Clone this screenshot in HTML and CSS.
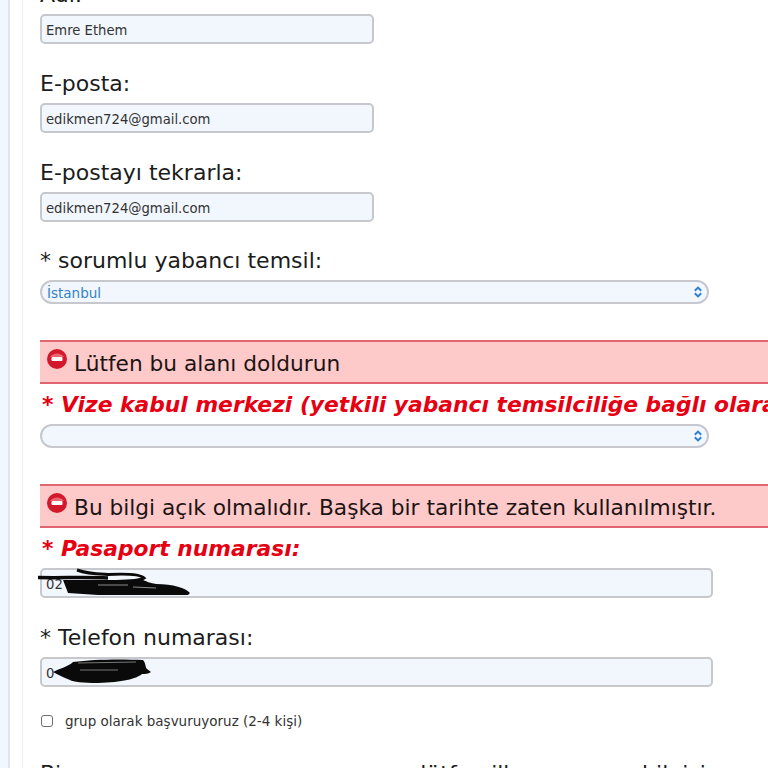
FILE: index.html
```html
<!DOCTYPE html>
<html lang="tr">
<head>
<meta charset="utf-8">
<title>Başvuru formu</title>
<link rel="stylesheet" href="styles.css">
</head>
<body>
<div class="page">
  <div class="rail"></div>
  <main class="panel">
    <form class="form">
      <div class="field">
        <label class="label">Adı:</label>
        <div class="input short">Emre Ethem</div>
      </div>
      <div class="field">
        <label class="label">E-posta:</label>
        <div class="input short">edikmen724@gmail.com</div>
      </div>
      <div class="field">
        <label class="label">E-postayı tekrarla:</label>
        <div class="input short">edikmen724@gmail.com</div>
      </div>
      <div class="field select-field">
        <label class="label">* sorumlu yabancı temsil:</label>
        <div class="select"><span class="select-value">İstanbul</span>
          <svg class="chev" viewBox="0 0 10 12"><path d="M1.8 4.8 5 1.6 8.2 4.8M1.8 7.2 5 10.4 8.2 7.2" fill="none" stroke="#2f7fd0" stroke-width="2"/></svg>
        </div>
      </div>
      <div class="alert">
        <svg class="stop" viewBox="0 0 20 20"><circle cx="10" cy="10" r="10" fill="#d3182c"/><path d="M3 8A8 7 0 0 1 17 8Z" fill="#ea6470"/><rect x="4.5" y="8" width="11" height="4" rx="1" fill="#fff"/></svg>
        <span>Lütfen bu alanı doldurun</span>
      </div>
      <div class="field error-field">
        <label class="label error">* Vize kabul merkezi (yetkili yabancı temsilciliğe bağlı olarak):</label>
        <div class="select">
          <svg class="chev" viewBox="0 0 10 12"><path d="M1.8 4.8 5 1.6 8.2 4.8M1.8 7.2 5 10.4 8.2 7.2" fill="none" stroke="#2f7fd0" stroke-width="2"/></svg>
        </div>
      </div>
      <div class="alert">
        <svg class="stop" viewBox="0 0 20 20"><circle cx="10" cy="10" r="10" fill="#d3182c"/><path d="M3 8A8 7 0 0 1 17 8Z" fill="#ea6470"/><rect x="4.5" y="8" width="11" height="4" rx="1" fill="#fff"/></svg>
        <span>Bu bilgi açık olmalıdır. Başka bir tarihte zaten kullanılmıştır.</span>
      </div>
      <div class="field error-field passport">
        <label class="label error">* Pasaport numarası:</label>
        <div class="input wide">02
          <svg class="scribble scribble-a" viewBox="0 0 155 28"><path d="M0 7.5C20 8 50 7 70 8" fill="none" stroke="#0a0a0a" stroke-width="3.5"/><path d="M39 0C50 4 60 4 70 4.5 90 3.5 103 5 106 8 100 12 85 11 62 12" fill="none" stroke="#0a0a0a" stroke-width="3"/><path d="M25 10 105 10C110 12 112 13 118 14 135 14 148 18 152 23L150 25 60 25 30 23Z" fill="#0a0a0a"/><path d="M95 17 118 18M60 15 90 15" stroke="#8a8a8a" stroke-width="1"/></svg>
        </div>
      </div>
      <div class="field">
        <label class="label">* Telefon numarası:</label>
        <div class="input wide">0
          <svg class="scribble scribble-b" viewBox="0 0 104 25"><path d="M5 13C12 9 20 8 25 3 45 0 75 0 95 1 98 4 97 8 99 10L103 13C100 15 97 15 94 15 88 20 75 23 50 24 35 24 25 23 22 21 15 18 10 16 5 13Z" fill="#0a0a0a"/><path d="M30 4 88 3M32 11 70 11" stroke="#777" stroke-width="1"/></svg>
        </div>
      </div>
      <label class="check">
        <span class="box"></span>
        <span>grup olarak başvuruyoruz (2-4 kişi)</span>
      </label>
      <p class="cut">Bir <span class="gap"></span> lütfen ilk <span class="gap-small"></span> bilgisi</p>
    </form>
  </main>
</div>
</body>
</html>
```
FILE: styles.css
```css
html, body {
  margin: 0;
  height: 768px;
  overflow: hidden;
  background: #fff;
}
body {
  font-family: "DejaVu Sans", sans-serif;
  color: #1c1c1c;
}
.page {
  display: flex;
  height: 768px;
  overflow: hidden;
}
.rail {
  width: 8px;
  flex: none;
  background: #f2f7ff;
  border-right: 2px solid #e2e4ea;
}
.panel {
  flex: 1;
  min-width: 0;
  margin-left: 12px;
  border-left: 1px solid #eceef0;
  padding-left: 17px;
  overflow: hidden;
}
.form {
  margin-top: -18px;
}
.field {
  margin-bottom: 27px;
}
.select-field {
  margin-top: -1px;
  margin-bottom: 36px;
}
.label {
  display: block;
  font-size: 22px;
  line-height: 26px;
  margin-bottom: 6px;
  white-space: nowrap;
}
.input {
  position: relative;
  box-sizing: border-box;
  height: 30px;
  border: 2px solid #c6c8ce;
  border-radius: 5px;
  background: #f2f6fd;
  font-size: 13.2px;
  line-height: 29px;
  padding-left: 4px;
  color: #333;
}
.short { width: 334px; }
.wide { width: 673px; }
.select {
  box-sizing: border-box;
  width: 669px;
  height: 24px;
  border: 2px solid #c6c8ce;
  border-radius: 12px;
  background: #f2f6fd;
  display: flex;
  align-items: center;
  justify-content: space-between;
  padding: 0 4px 0 5px;
}
.select .chev { margin-left: auto; }
.select-value {
  font-size: 13.5px;
  line-height: 20px;
  padding-top: 1px;
  color: #3183c8;
}
.chev {
  width: 10px;
  height: 12px;
  flex: none;
}
.alert {
  box-sizing: border-box;
  height: 44px;
  border-top: 2px solid #e06570;
  border-bottom: 2px solid #e06570;
  background: #fec9c9;
  display: flex;
  align-items: center;
  gap: 7px;
  padding-left: 7px;
  font-size: 21.7px;
  white-space: nowrap;
  color: #1c1414;
}
.alert span { padding-top: 3px; }
.stop {
  width: 20px;
  height: 20px;
  flex: none;
  margin-top: -7px;
}
.error-field {
  margin-top: 8px;
  margin-bottom: 36px;
}
.passport {
  margin-bottom: 27px;
}
.error {
  color: #e60012;
  font-weight: bold;
  font-style: italic;
  font-size: 21.8px;
  padding-left: 2px;
}
.scribble {
  position: absolute;
  overflow: visible;
}
.scribble-a {
  left: -4px;
  top: 0;
  width: 155px;
  height: 28px;
}
.scribble-b {
  left: 6px;
  top: 0;
  width: 104px;
  height: 25px;
}
.check {
  display: flex;
  align-items: center;
  gap: 12px;
  font-size: 13.5px;
  color: #333;
  height: 20px;
  margin-top: -3px;
}
.box {
  box-sizing: border-box;
  width: 12px;
  height: 12px;
  margin-left: 1px;
  border: 1.5px solid #6e6e72;
  border-radius: 3px;
  background: #fff;
}
.cut {
  margin: 30px 0 0;
  font-size: 22px;
  line-height: 26px;
  white-space: nowrap;
}
.gap { display: inline-block; width: 336px; }
.gap-small { display: inline-block; width: 112px; }
```
